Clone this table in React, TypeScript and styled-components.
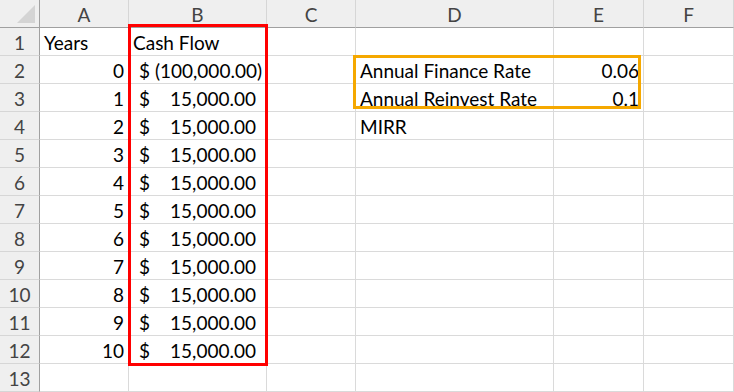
import * as React from "react";
import styled, { createGlobalStyle } from "styled-components";

const GlobalStyle = createGlobalStyle`
  html, body {
    margin: 0;
    padding: 0;
    background: #ffffff;
    overflow: hidden;
  }
`;

const Sheet = styled.div`
  position: relative;
  width: 734px;
  height: 392px;
  display: grid;
  grid-template-columns: 40px 89px 138px 89px 198px 90px 90px;
  grid-template-rows: repeat(14, 28px);
  font-family: "Lato", "Liberation Sans", sans-serif;
  font-size: 19px;
  color: #000000;
  box-sizing: border-box;
  * {
    box-sizing: border-box;
  }
`;

const Corner = styled.div`
  background: #efefef;
  border-right: 1px solid #a0a0a0;
  border-bottom: 1px solid #a0a0a0;
  display: flex;
  justify-content: flex-end;
  align-items: flex-end;
  padding: 0 4px 4px 0;
`;

const ColHeader = styled.div`
  background: #efefef;
  color: #444444;
  border-right: 1px solid #d6d6d6;
  border-bottom: 1px solid #a0a0a0;
  display: flex;
  align-items: center;
  justify-content: center;
  padding-top: 1px;
`;

const RowHeader = styled.div`
  background: #efefef;
  color: #444444;
  border-right: 1px solid #a0a0a0;
  border-bottom: 1px solid #d6d6d6;
  display: flex;
  align-items: center;
  justify-content: center;
  padding-top: 2px;
`;

const Cell = styled.div<{ $align?: "left" | "right" }>`
  border-right: 1px solid #dadada;
  border-bottom: 1px solid #dadada;
  display: flex;
  align-items: center;
  justify-content: ${(p) => (p.$align === "right" ? "flex-end" : "flex-start")};
  padding: 2px 4px 0 4px;
  white-space: nowrap;
`;

const Accounting = styled(Cell)`
  justify-content: space-between;
`;

const Dollar = styled.span`
  padding-left: 6px;
`;

const Amount = styled.span<{ $negative?: boolean }>`
  padding-right: ${(p) => (p.$negative ? "0" : "6px")};
`;

const Highlight = styled.div<{ $color: string }>`
  position: absolute;
  border: 3px solid ${(p) => p.$color};
  pointer-events: none;
`;

const columns = ["A", "B", "C", "D", "E", "F"];

type Row = {
  a?: string | number;
  b?: number | string;
  d?: string;
  e?: string;
};

const rows: Row[] = [
  { a: "Years", b: "Cash Flow" },
  { a: 0, b: -100000, d: "Annual Finance Rate", e: "0.06" },
  { a: 1, b: 15000, d: "Annual Reinvest Rate", e: "0.1" },
  { a: 2, b: 15000, d: "MIRR" },
  { a: 3, b: 15000 },
  { a: 4, b: 15000 },
  { a: 5, b: 15000 },
  { a: 6, b: 15000 },
  { a: 7, b: 15000 },
  { a: 8, b: 15000 },
  { a: 9, b: 15000 },
  { a: 10, b: 15000 },
  {},
];

const fmt = (n: number) =>
  Math.abs(n).toLocaleString("en-US", {
    minimumFractionDigits: 2,
    maximumFractionDigits: 2,
  });

const CashCell = ({ value }: { value: number | string | undefined }) => {
  if (typeof value === "number") {
    const neg = value < 0;
    return (
      <Accounting>
        <Dollar>$</Dollar>
        <Amount $negative={neg}>{neg ? `(${fmt(value)})` : fmt(value)}</Amount>
      </Accounting>
    );
  }
  return <Cell>{value}</Cell>;
};

export default function App() {
  return (
    <>
      <GlobalStyle />
      <Sheet>
        <Corner>
          <svg width="18" height="18" viewBox="0 0 18 18">
            <polygon points="18,0 18,18 0,18" fill="#d4d4d4" />
          </svg>
        </Corner>
        {columns.map((c) => (
          <ColHeader key={c}>{c}</ColHeader>
        ))}
        {rows.map((r, i) => (
          <React.Fragment key={i}>
            <RowHeader>{i + 1}</RowHeader>
            <Cell $align={typeof r.a === "number" ? "right" : "left"}>{r.a}</Cell>
            <CashCell value={r.b} />
            <Cell />
            <Cell>{r.d}</Cell>
            <Cell $align="right">{r.e}</Cell>
            <Cell />
          </React.Fragment>
        ))}
        <Highlight $color="#ff0000" style={{ left: 128, top: 24, width: 140, height: 342 }} />
        <Highlight $color="#f5a800" style={{ left: 353, top: 55, width: 288, height: 54 }} />
      </Sheet>
    </>
  );
}
